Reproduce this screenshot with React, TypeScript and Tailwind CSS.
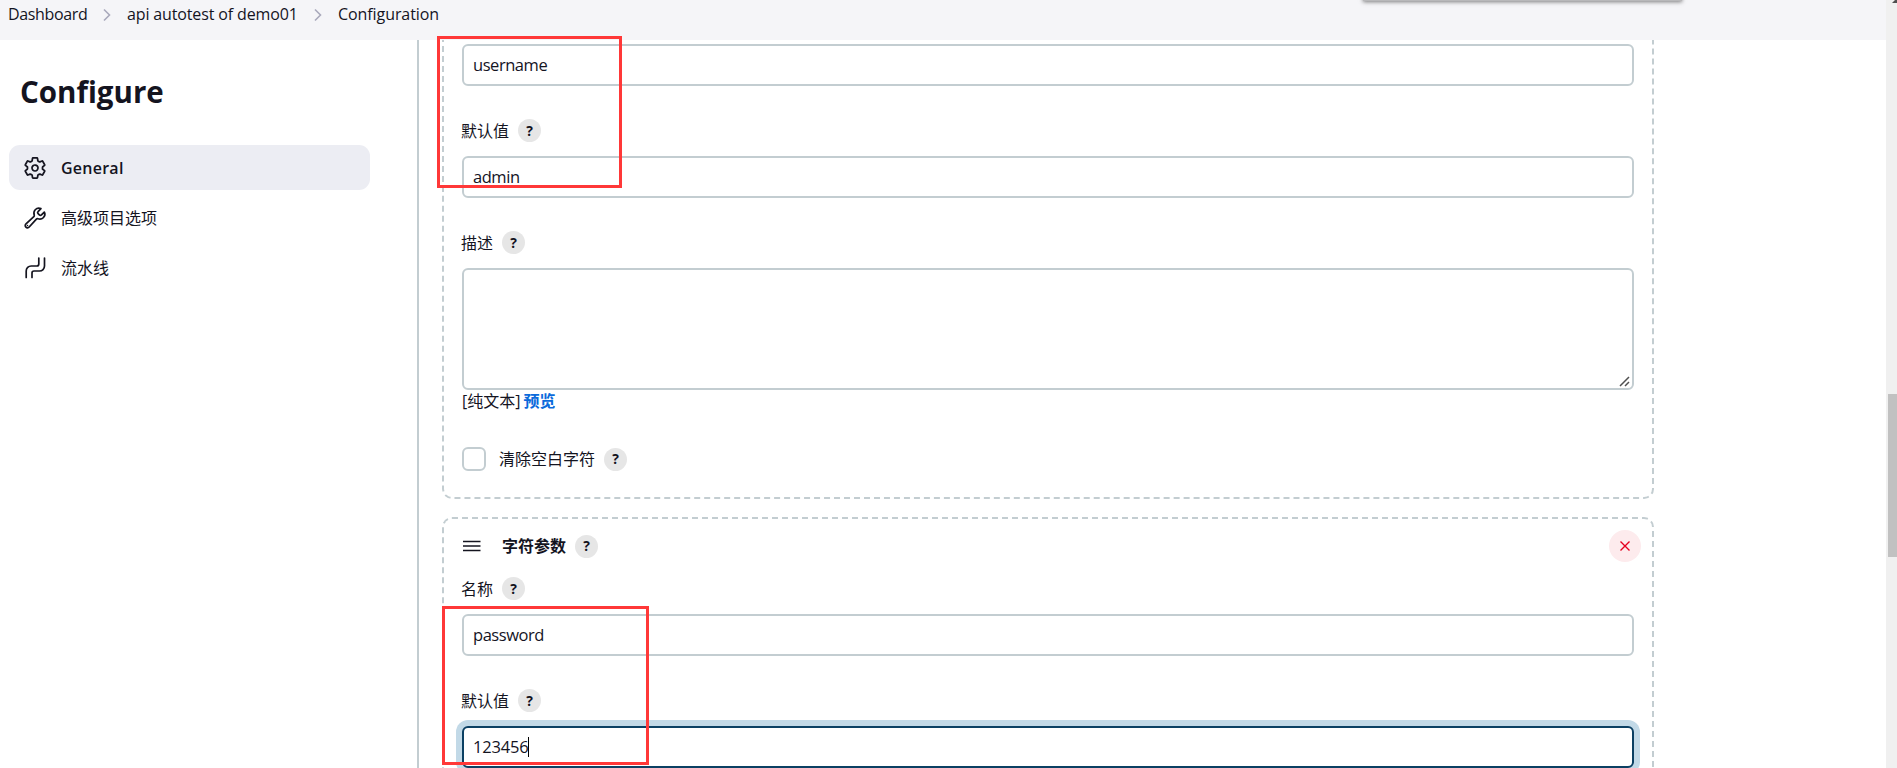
import type { ReactNode } from "react";
import clsx from "clsx";
import { IoBuildOutline, IoSettingsOutline } from "react-icons/io5";

function Chevron() {
  return (
    <svg width="8" height="14" viewBox="0 0 8 14" fill="none" className="shrink-0">
      <path d="M1 1.5 6.5 7 1 12.5" stroke="#a9a9bb" strokeWidth="1.6" />
    </svg>
  );
}

function PipelineIcon() {
  return (
    <svg width="24" height="24" viewBox="0 0 24 24" fill="none" stroke="currentColor" strokeWidth="1.7">
      <path
        d="M3.200 21.500v-6.500a5 5 0 0 1 5-5h5.600a2 2 0 0 0 2-2V2M9 21.500v-4.500a2 2 0 0 1 2-2h5.500a5 5 0 0 0 5-5v-8"
        strokeLinecap="round"
      />
    </svg>
  );
}

function HelpBadge() {
  return (
    <span className="flex size-[23px] shrink-0 items-center justify-center rounded-full bg-[#e6e6e6] text-[14px] leading-none font-bold">
      ?
    </span>
  );
}

function FieldLabel({ children }: { children: ReactNode }) {
  return (
    <div className="-ml-px flex h-[23px] items-center gap-[9px]">
      <span>{children}</span>
      <HelpBadge />
    </div>
  );
}

function TextField({ value, focused = false }: { value: string; focused?: boolean }) {
  return (
    <div
      className={clsx(
        "flex h-[42px] items-center rounded-md border-2 bg-white px-[9px]",
        focused ? "border-[#0b4063] ring-6 ring-[#c2d9e7]" : "border-[#c3cdd1]",
      )}
    >
      <span className={clsx("text-[16.5px]", focused ? "tracking-[-0.2px]" : "tracking-[-0.45px]")}>{value}</span>
      {focused && <span className="h-5 w-px bg-black" />}
    </div>
  );
}

function NavItem({ icon, label, active = false }: { icon: ReactNode; label: string; active?: boolean }) {
  return (
    <li
      className={clsx(
        "flex h-[45px] items-center gap-3.5 rounded-[11px] pl-3.5",
        active && "bg-[#ecedf3] font-semibold tracking-[0.25px]",
      )}
    >
      {icon}
      <span>{label}</span>
    </li>
  );
}

function Breadcrumbs() {
  return (
    <header className="flex h-10 items-start bg-[#f5f5f8] pl-2 leading-[29px]">
      <div className="flex items-center">
        <span className="w-[95px] tracking-[-0.35px]">Dashboard</span>
        <Chevron />
        <span className="ml-4 w-[187px] tracking-[-0.14px]">api autotest of demo01</span>
        <Chevron />
        <span className="ml-4 tracking-[-0.08px]">Configuration</span>
      </div>
    </header>
  );
}

function Sidebar() {
  return (
    <aside className="w-[419px] shrink-0 border-r-2 border-[#c3cdd1] pl-[9px]">
      <h1 className="mt-8 ml-[11px] text-[29.5px] leading-[40px] font-bold">Configure</h1>
      <ul className="mt-[33px] flex w-[361px] flex-col gap-[5px]">
        <NavItem
          active
          icon={<IoSettingsOutline size={24} className="[&_path]:[stroke-width:37]" />}
          label="General"
        />
        <NavItem icon={<IoBuildOutline size={24} className="[&_path]:[stroke-width:37]" />} label="高级项目选项" />
        <NavItem icon={<PipelineIcon />} label="流水线" />
      </ul>
    </aside>
  );
}

function Scrollbar() {
  return (
    <div className="absolute top-0 right-0 h-full w-[11px] bg-[#f0f0f0]">
      <div className="mt-[394px] ml-0.5 h-[163px] bg-[#c1c1c1]" />
      <svg width="5" height="3" className="absolute top-0 right-0">
        <path d="M0 3 3 0H5V3Z" fill="#505050" />
      </svg>
    </div>
  );
}

export default function App() {
  return (
    <div className="relative flex h-[768px] w-[1897px] flex-col overflow-hidden bg-white font-['Open_Sans','Noto_Sans_CJK_SC',sans-serif] text-base leading-6 text-[#14141f]">
      <Breadcrumbs />
      <div className="flex min-h-0 flex-1">
        <Sidebar />
        <main className="ml-[23px] w-[1212px] overflow-hidden">
          <section className="-mt-16 rounded-[10px] border-2 border-dashed border-[#c3cdd1] px-[18px] pt-[66px] pb-[25px]">
            <TextField value="username" />
            <div className="mt-[33px] mb-3.5">
              <FieldLabel>默认值</FieldLabel>
            </div>
            <TextField value="admin" />
            <div className="mt-[33px] mb-3.5">
              <FieldLabel>描述</FieldLabel>
            </div>
            <div className="flex h-[122px] items-end justify-end rounded-md border-2 border-[#c3cdd1]">
              <svg width="13" height="13" viewBox="0 0 13 13" stroke="#505050" strokeWidth="1.5">
                <path d="M1 11 10 2M6 11l4-4" />
              </svg>
            </div>
            <div className="-mt-px flex h-[25px] gap-[3px]">
              <span>[纯文本]</span>
              <span className="font-bold text-[#0b6adb]">预览</span>
            </div>
            <div className="mt-8 flex h-[26px] items-center">
              <span className="mr-3.5 size-6 rounded-md border-2 border-[#c3cdd1]" />
              <FieldLabel>清除空白字符</FieldLabel>
            </div>
          </section>

          <section className="mt-[18px] h-[300px] rounded-[10px] border-2 border-dashed border-[#c3cdd1] px-[18px] pt-[11px]">
            <div className="flex h-8 items-center">
              <svg width="18" height="12" viewBox="0 0 18 12" stroke="currentColor" strokeWidth="1.6" className="mr-[22px] ml-px">
                <path d="M0 1.500h17.500M0 6h17.500M0 10.500h17.500" />
              </svg>
              <div className="flex-1 font-bold">
                <FieldLabel>字符参数</FieldLabel>
              </div>
              <span className="-mr-[7px] flex size-8 items-center justify-center rounded-full bg-[#fdebed]">
                <svg width="10" height="10" viewBox="0 0 10 10" stroke="#e6001f" strokeWidth="1.4">
                  <path d="m.5.5 9 9m0-9-9 9" />
                </svg>
              </span>
            </div>
            <div className="mt-[15px] mb-3.5">
              <FieldLabel>名称</FieldLabel>
            </div>
            <TextField value="password" />
            <div className="mt-[33px] mb-3.5">
              <FieldLabel>默认值</FieldLabel>
            </div>
            <TextField value="123456" focused />
          </section>
        </main>
      </div>

      {/* floating panel tucked under the top edge */}
      <div className="absolute -top-4 left-[1363px] h-[17px] w-[319px] bg-[#b8b8ba] shadow-[0_1px_4px_rgba(0,0,0,0.5)]" />
      <Scrollbar />

      {/* highlight frames */}
      <div className="absolute top-9 left-[437px] h-[152px] w-[185px] border-3 border-[#ff3838]" />
      <div className="absolute top-[606px] left-[442px] h-[159px] w-[207px] border-3 border-[#ff3838]" />
    </div>
  );
}
